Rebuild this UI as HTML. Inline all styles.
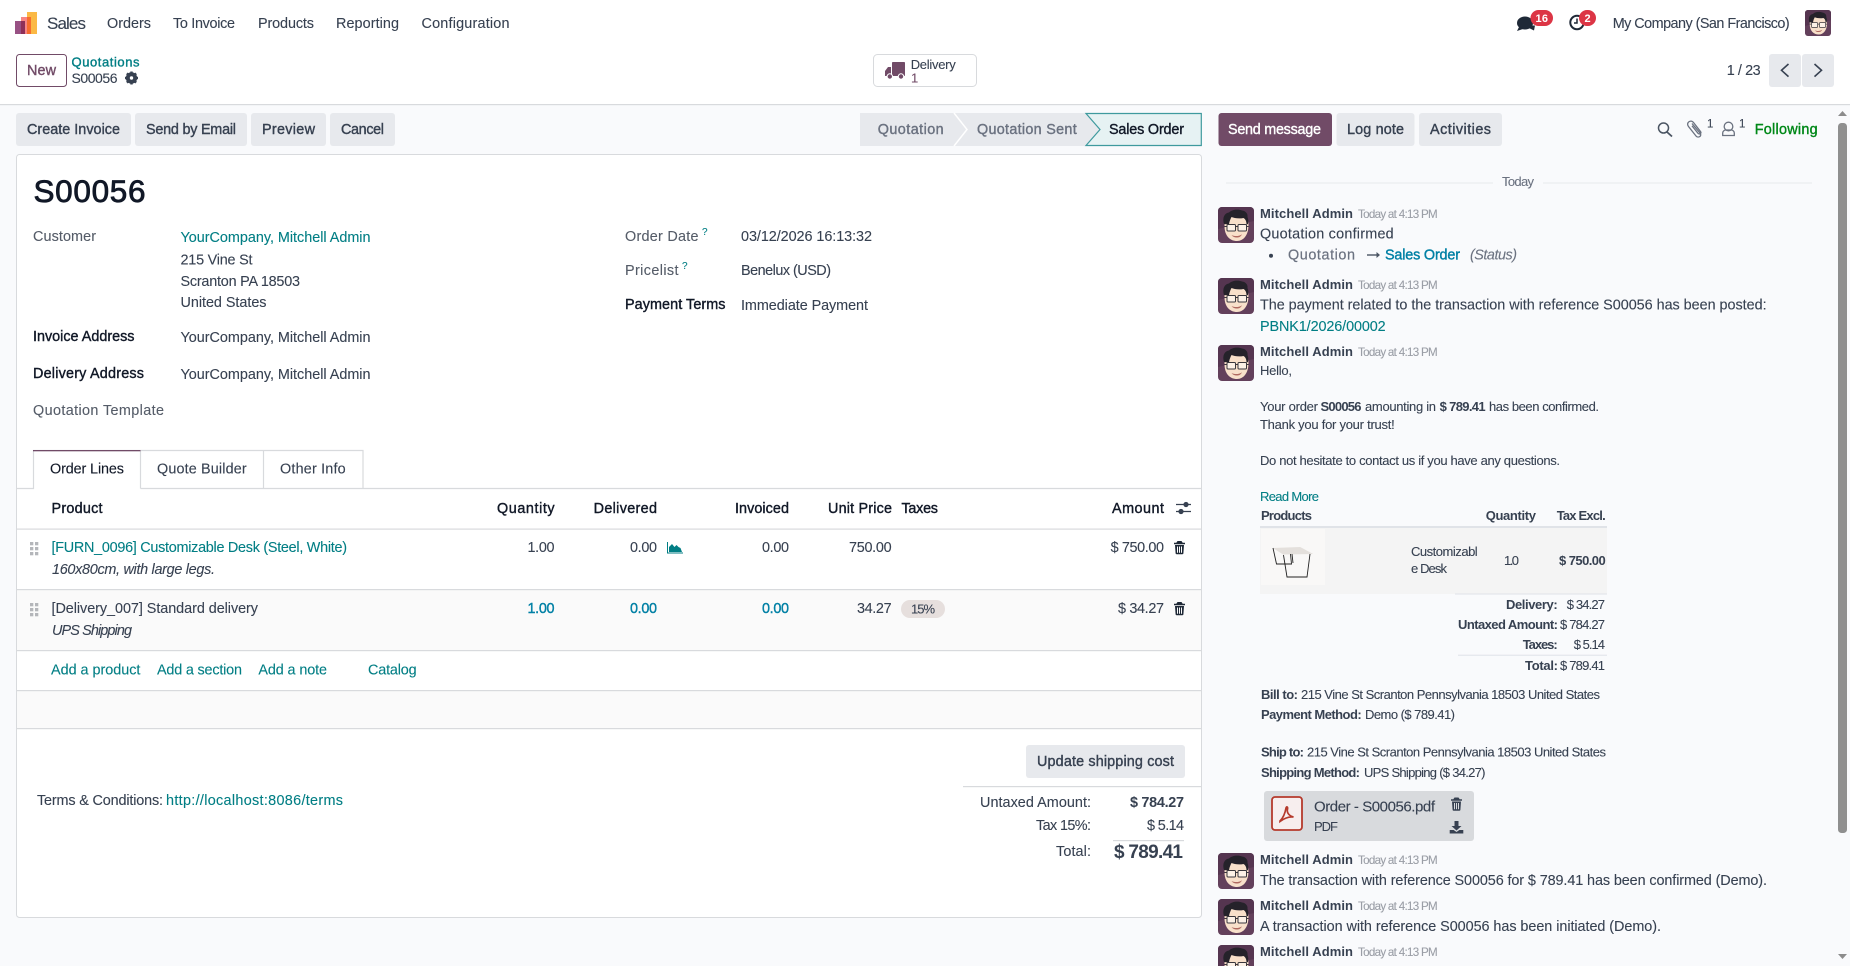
<!DOCTYPE html>
<html lang="en"><head><meta charset="utf-8"><title>S00056 - Sales</title>
<style>
html,body{margin:0;padding:0;width:1850px;height:966px;overflow:hidden;background:#f9fafc;color:#374151}
svg{display:block;position:absolute;left:0;top:0}
text{font-family:"Liberation Sans",sans-serif;font-size:14.4px;fill:#374151;stroke:currentColor;stroke-width:.1}
text.m{stroke-width:.38}
.b{font-weight:700}
text.b{stroke-width:0}
.s{font-size:13px}
.xs{font-size:11.6px}
.tl{fill:#017e84;color:#017e84}
.dk{fill:#111827;color:#111827}
.gr{fill:#6b7280;color:#6b7280}
.lb{fill:#555c68;color:#555c68}
.g2{fill:#9a9ea6;color:#9a9ea6}
.bl{fill:#0180a5;color:#0180a5}
.d{color:#374151}
.w{fill:#fff;color:#fff}
.i{font-style:italic}
</style></head><body>
<svg width="1850" height="966" viewBox="0 0 1850 966" xmlns="http://www.w3.org/2000/svg">
<defs>
<symbol id="av" viewBox="0 0 36 36">
<rect width="36" height="36" rx="4" fill="#63405b"/>
<path d="M0 22V4a4 4 0 0 1 4-4h28a4 4 0 0 1 4 4v10z" fill="#553550"/>
<path d="M6.500 19c0-9 6-12 12.500-12s11.500 3 11.500 11c0 10-5 16-11.500 16C12 34 6.500 29 6.500 19z" fill="#f8e0ca"/>
<path d="M6 17C4 10 7 6 11 5.500c3-3 9-3.500 13-2 4 .5 6 3.500 5.500 6.500 1 2.500 1 5 .5 7l-1.500.5c0-3-1-5.500-3-6.500-5 1-9.500 0-12-1-1 2-2 4-2.500 7.500z" fill="#25222a"/>
<rect x="9" y="17.500" width="8.500" height="6.500" rx="1" fill="#fff8" stroke="#3a383d" stroke-width="1"/>
<rect x="20" y="17.500" width="8.500" height="6.500" rx="1" fill="#fff8" stroke="#3a383d" stroke-width="1"/>
<path d="M17.500 19.500h2.500M6.500 19.500h2.500M28.500 19.500h2" stroke="#3a383d" stroke-width="1"/>
<path d="M13.500 28c3 1.500 7.500 1.500 10.500-.8-1.500 2.800-3 3.300-5.300 3.300s-4-.8-5.200-2.500z" fill="#b06a60"/>
</symbol>
<g id="tr"><path d="M2.300 1.800 3.500 0h4l1.200 1.800H11v1.400H0V1.800zM1 4h9l-.6 8.200c0 .6-.5 1-1 1H2.600c-.5 0-1-.4-1-1zm2 1.500v6.200h1V5.500zm2 0v6.200h1V5.500zm2 0v6.200h1V5.500z"/></g>
</defs>

<!-- header -->
<rect width="1850" height="104" fill="#fff"/>
<rect y="104" width="1850" height="1.200" fill="#d8dadd"/>
<rect x="27" y="12" width="10" height="22" fill="#fbb945"/>
<rect x="21" y="17" width="10" height="17" fill="#f78585"/>
<rect x="27" y="17" width="4" height="17" fill="#f76c2e"/>
<rect x="15" y="21" width="10" height="13" fill="#985184"/>
<rect x="21" y="21" width="4" height="13" fill="#8f2f58"/>
<text x="47" y="29" style="font-size:17px" textLength="39">Sales</text>
<text x="107" y="28" textLength="44">Orders</text>
<text x="173" y="28" textLength="62">To Invoice</text>
<text x="258" y="28" textLength="56">Products</text>
<text x="336" y="28" textLength="63">Reporting</text>
<text x="421.500" y="28" textLength="88">Configuration</text>

<!-- systray -->
<g fill="#1f2937">
<ellipse cx="1525" cy="23" rx="8" ry="6.500"/>
<path d="M1519 27l-2 4 6-2zM1531 25.500l4 0-1 5-5-2.500z"/>
</g>
<rect x="1530.500" y="10" width="22.500" height="16" rx="8" fill="#dc3545"/>
<text x="1535.500" y="22" class="b w" style="font-size:11px" textLength="12.500">16</text>
<circle cx="1577" cy="22.500" r="6.700" fill="none" stroke="#1f2937" stroke-width="2"/>
<path d="M1577 18.500v4.500h-3" fill="none" stroke="#1f2937" stroke-width="1.500"/>
<rect x="1579" y="10" width="17" height="16" rx="8" fill="#dc3545"/>
<text x="1584.500" y="22" class="b w" style="font-size:11px" textLength="6.500">2</text>
<text x="1612.700" y="28" textLength="177">My Company (San Francisco)</text>
<use href="#av" x="1805" y="10" width="26" height="26"/>

<!-- control panel -->
<rect x="16.500" y="54.500" width="50" height="32" rx="3" fill="#fff" stroke="#714b67"/>
<text x="27" y="75" class="m" style="fill:#714b67;color:#714b67" textLength="29">New</text>
<text x="71.500" y="66.500" class="s m tl" textLength="68">Quotations</text>
<text x="71.500" y="83" style="font-size:14px" textLength="46">S00056</text>
<g transform="translate(131.500 78)">
<circle r="4.300" fill="none" stroke="#374151" stroke-width="2.800"/>
<path d="M-1.200-6.500h2.400v13h-2.400zM-6.500-1.200h13v2.400h-13z" fill="#374151"/>
<path d="M-1.200-6.500h2.400v13h-2.400zM-6.500-1.200h13v2.400h-13z" fill="#374151" transform="rotate(45)"/>
<circle r="1.700" fill="#fff"/>
</g>
<rect x="873.500" y="54.500" width="103" height="32" rx="4" fill="#fff" stroke="#d8dadd"/>
<g fill="#714b67">
<rect x="892" y="62" width="13" height="14" rx=".8"/>
<path d="M885 76v-5l3-4h3v9z"/>
<circle cx="889.800" cy="76.500" r="3.200" fill="#fff"/><circle cx="889.800" cy="76.500" r="2.200"/>
<circle cx="901" cy="76.500" r="3.200" fill="#fff"/><circle cx="901" cy="76.500" r="2.200"/>
</g>
<text x="910.700" y="69" class="s" textLength="45">Delivery</text>
<text x="911" y="82.500" class="s" style="fill:#714b67;color:#714b67">1</text>
<text x="1726.700" y="75" textLength="34">1 / 23</text>
<rect x="1769" y="54" width="32" height="33" rx="3" fill="#e7e9ed"/>
<rect x="1802" y="54" width="32" height="33" rx="3" fill="#e7e9ed"/>
<path d="M1788.500 64l-7 6.300 7 6.300M1814.500 64l7 6.300-7 6.300" fill="none" stroke="#374151" stroke-width="1.600"/>

<!-- action buttons -->
<g fill="#e7e9ed">
<rect x="16" y="113" width="115" height="33" rx="3"/>
<rect x="135" y="113" width="112" height="33" rx="3"/>
<rect x="251" y="113" width="75" height="33" rx="3"/>
<rect x="330" y="113" width="65" height="33" rx="3"/>
<rect x="1336.500" y="113" width="78" height="33" rx="3"/>
<rect x="1419" y="113" width="83" height="33" rx="3"/>
</g>
<rect x="1218.500" y="113" width="113.500" height="33" rx="3" fill="#714b67"/>
<text x="27" y="134" class="m d" textLength="93">Create Invoice</text>
<text x="146" y="134" class="m d" textLength="90">Send by Email</text>
<text x="262" y="134" class="m d" textLength="53">Preview</text>
<text x="341" y="134" class="m d" textLength="43">Cancel</text>
<text x="1228" y="134" class="m w" textLength="93">Send message</text>
<text x="1347" y="134" class="m d" textLength="57">Log note</text>
<text x="1430" y="134" class="m d" textLength="61">Activities</text>

<!-- statusbar -->
<path d="M860 113H1086L1100 129.500 1086 146H860z" fill="#e7e9ed"/>
<path d="M954 113l13 16.500-13 16.500" fill="none" stroke="#fff" stroke-width="1.500"/>
<path d="M1086 113.500H1201.300V145.500H1086L1100 129.500z" fill="#e6f2f3" stroke="#3f9a9e" stroke-width="1.200"/>
<text x="877.700" y="134" class="m gr" textLength="66">Quotation</text>
<text x="977" y="134" class="m gr" textLength="99.700">Quotation Sent</text>
<text x="1109" y="134" class="m dk" textLength="75">Sales Order</text>

<!-- sheet -->
<rect x="16.500" y="154.500" width="1185" height="763" rx="3" fill="#fff" stroke="#d8dadd"/>
<text x="33.500" y="202" class="m" style="font-size:31.500px;fill:#111827;color:#111827;stroke-width:.8" textLength="112">S00056</text>

<text x="33" y="241" class="lb" textLength="63">Customer</text>
<text x="180.500" y="242" class="tl" textLength="190">YourCompany, Mitchell Admin</text>
<text x="180.500" y="264.500" textLength="72">215 Vine St</text>
<text x="180.500" y="286" textLength="119.500">Scranton PA 18503</text>
<text x="180.500" y="307" textLength="86">United States</text>
<text x="33" y="341" class="m dk" textLength="101.500">Invoice Address</text>
<text x="180.500" y="342" textLength="190">YourCompany, Mitchell Admin</text>
<text x="33" y="378" class="m dk" textLength="111">Delivery Address</text>
<text x="180.500" y="379" textLength="190">YourCompany, Mitchell Admin</text>
<text x="33" y="415" class="lb" textLength="131">Quotation Template</text>

<text x="625" y="241" class="lb" textLength="73.500">Order Date</text>
<text x="702" y="235" class="tl" style="font-size:10px">?</text>
<text x="741" y="241" textLength="131">03/12/2026 16:13:32</text>
<text x="625" y="275" class="lb" textLength="53.500">Pricelist</text>
<text x="682" y="269" class="tl" style="font-size:10px">?</text>
<text x="741" y="275" textLength="90">Benelux (USD)</text>
<text x="625" y="309" class="m dk" textLength="100.500">Payment Terms</text>
<text x="741" y="310" textLength="127">Immediate Payment</text>

<!-- tabs -->
<path d="M17 488.500H33.500V450.500H140.500V488.500M140.500 450.500H263.500V488.500M263.500 450.500H363V488.500M140.500 488.500H1201" fill="none" stroke="#d8dadd" stroke-width="1.200"/>
<rect x="33" y="450" width="107.500" height="1.300" fill="#714b67"/>
<text x="50" y="473.300" class="dk" textLength="74">Order Lines</text>
<text x="157" y="473.300" textLength="89.700">Quote Builder</text>
<text x="280" y="473.300" textLength="65.700">Other Info</text>

<!-- table -->
<rect x="17" y="590" width="1184" height="60" fill="#fafafa"/>
<rect x="17" y="691" width="1184" height="37" fill="#fafafa"/>
<g fill="#d8dadd">
<rect x="17" y="528.500" width="1184" height="1.200"/>
<rect x="17" y="589" width="1184" height="1.200"/>
<rect x="17" y="650" width="1184" height="1.200"/>
<rect x="17" y="690" width="1184" height="1.200"/>
<rect x="17" y="728" width="1184" height="1.200"/>
</g>
<text x="51.500" y="513" class="m dk" textLength="51">Product</text>
<text x="497" y="513" class="m dk" textLength="57.600">Quantity</text>
<text x="593.600" y="513" class="m dk" textLength="63.400">Delivered</text>
<text x="735" y="513" class="m dk" textLength="54">Invoiced</text>
<text x="828" y="513" class="m dk" textLength="64">Unit Price</text>
<text x="901.500" y="513" class="m dk" textLength="36.500">Taxes</text>
<text x="1112" y="513" class="m dk" textLength="52">Amount</text>
<path d="M1176 504.500h15M1176 511.500h15" stroke="#374151" stroke-width="1.200"/>
<circle cx="1186" cy="504.500" r="2.600" fill="#374151"/><circle cx="1181" cy="511.500" r="2.600" fill="#374151"/>

<g fill="#b4b6ba">
<rect x="30" y="542" width="3.300" height="3.300"/><rect x="35" y="542" width="3.300" height="3.300"/>
<rect x="30" y="547" width="3.300" height="3.300"/><rect x="35" y="547" width="3.300" height="3.300"/>
<rect x="30" y="552" width="3.300" height="3.300"/><rect x="35" y="552" width="3.300" height="3.300"/>
<rect x="30" y="603" width="3.300" height="3.300"/><rect x="35" y="603" width="3.300" height="3.300"/>
<rect x="30" y="608" width="3.300" height="3.300"/><rect x="35" y="608" width="3.300" height="3.300"/>
<rect x="30" y="613" width="3.300" height="3.300"/><rect x="35" y="613" width="3.300" height="3.300"/>
</g>
<text x="51.500" y="552" class="tl" textLength="295.500">[FURN_0096] Customizable Desk (Steel, White)</text>
<text x="52" y="574" class="i" textLength="163">160x80cm, with large legs.</text>
<text x="51.500" y="613" textLength="206.500">[Delivery_007] Standard delivery</text>
<text x="52" y="635" class="i" textLength="80">UPS Shipping</text>

<text x="527.500" y="552" textLength="27">1.00</text>
<text x="630" y="552" textLength="27">0.00</text>
<path d="M667.500 542v11h15.500" fill="none" stroke="#017e84" stroke-width="1"/>
<path d="M669 552v-5l3-3 2.500 3 2-2 2 2 2 1 1.500 4z" fill="#017e84"/>
<text x="762" y="552" textLength="27">0.00</text>
<text x="849" y="552" textLength="42.600">750.00</text>
<text x="1110.600" y="552" textLength="53.400">$ 750.00</text>
<use href="#tr" x="1174" y="541" fill="#1f2937"/>

<text x="527.500" y="613" class="m bl" textLength="27">1.00</text>
<text x="630" y="613" class="m bl" textLength="27">0.00</text>
<text x="762" y="613" class="m bl" textLength="27">0.00</text>
<text x="857" y="613" textLength="34.600">34.27</text>
<rect x="901" y="600" width="44" height="18" rx="9" fill="#e6dfdd"/>
<text x="911" y="613.500" class="s" textLength="24">15%</text>
<text x="1118" y="613" textLength="46">$ 34.27</text>
<use href="#tr" x="1174" y="602" fill="#1f2937"/>

<text x="51" y="674.500" class="tl" textLength="89.400">Add a product</text>
<text x="157" y="674.500" class="tl" textLength="85">Add a section</text>
<text x="258.400" y="674.500" class="tl" textLength="68.600">Add a note</text>
<text x="368" y="674.500" class="tl" textLength="48.600">Catalog</text>

<!-- totals -->
<rect x="1026" y="745" width="159" height="33" rx="3" fill="#e7e9ed"/>
<text x="1037" y="766" class="m d" textLength="137">Update shipping cost</text>
<rect x="963" y="786" width="238" height="1.200" fill="#d8dadd"/>
<text x="37" y="805" textLength="126">Terms &amp; Conditions:</text>
<text x="166" y="805" class="tl" textLength="177">http://localhost:8086/terms</text>
<text x="980" y="807" textLength="111">Untaxed Amount:</text>
<text x="1130" y="807" class="b" textLength="54">$ 784.27</text>
<text x="1036" y="830" textLength="55">Tax 15%:</text>
<text x="1147" y="830" textLength="37">$ 5.14</text>
<rect x="1113" y="840" width="71" height="1.200" fill="#d8dadd"/>
<text x="1056" y="856" textLength="35">Total:</text>
<text x="1114" y="858" class="b" style="font-size:19px" textLength="69">$ 789.41</text>

<!-- chatter top -->
<circle cx="1663.500" cy="128" r="5" fill="none" stroke="#4b5563" stroke-width="1.500"/>
<path d="M1667 132l5 4.500" stroke="#4b5563" stroke-width="1.800"/>
<path d="M1692 123.500l8 9.500c2.500 3-2 5.500-4 3l-7.500-9.500c-3-3.800 2.500-7.500 5-4l7 9c1.500 2-1 3.300-2.500 1.800l-6-7.500" fill="none" stroke="#6b7280" stroke-width="1.300"/>
<text x="1707" y="127.700" style="font-size:11.500px">1</text>
<circle cx="1728.500" cy="126.500" r="4.300" fill="none" stroke="#6b7280" stroke-width="1.300"/>
<path d="M1722.700 135.500v-2.500c0-2 2-3 3-3h5.600c1 0 3 1 3 3v2.500z" fill="none" stroke="#6b7280" stroke-width="1.300"/>
<text x="1739" y="127.700" style="font-size:11.500px">1</text>
<text x="1754.700" y="134" class="m" style="fill:#008818;color:#008818" textLength="63">Following</text>

<!-- scrollbar -->
<path d="M1838 116l4.500-5 4.500 5z" fill="#8c8c8c"/>
<rect x="1838" y="123" width="9" height="710" rx="3.500" fill="#8f8f8f"/>
<path d="M1838 954l4.500 5 4.500-5z" fill="#8c8c8c"/>

<!-- messages -->
<rect x="1226" y="182.500" width="267" height="1" fill="#e7e9ed"/>
<rect x="1543" y="182.500" width="269" height="1" fill="#e7e9ed"/>
<text x="1502" y="186" class="s gr" textLength="32">Today</text>

<use href="#av" x="1218" y="207" width="36" height="36"/>
<text x="1260" y="218" class="b s" textLength="93">Mitchell Admin</text>
<text x="1358" y="218" class="xs g2" textLength="79.700">Today at 4:13 PM</text>
<text x="1260" y="238.500" textLength="133.700">Quotation confirmed</text>
<circle cx="1271" cy="255.700" r="2" fill="#374151"/>
<text x="1288" y="259.500" class="gr" style="stroke-width:.2" textLength="67">Quotation</text>
<path d="M1367 255h11" stroke="#4b5563" stroke-width="1.400"/><path d="M1376.500 252l3.500 3-3.500 3z" fill="#4b5563"/>
<text x="1385" y="259.500" class="m bl" textLength="75">Sales Order</text>
<text x="1470" y="259.500" class="i gr" textLength="47">(Status)</text>

<use href="#av" x="1218" y="278" width="36" height="36"/>
<text x="1260" y="289" class="b s" textLength="93">Mitchell Admin</text>
<text x="1358" y="289" class="xs g2" textLength="79.700">Today at 4:13 PM</text>
<text x="1260" y="309.500" textLength="506.600">The payment related to the transaction with reference S00056 has been posted:</text>
<text x="1260" y="331" class="tl" textLength="125.700">PBNK1/2026/00002</text>

<use href="#av" x="1218" y="345" width="36" height="36"/>
<text x="1260" y="356" class="b s" textLength="93">Mitchell Admin</text>
<text x="1358" y="356" class="xs g2" textLength="79.700">Today at 4:13 PM</text>
<text x="1260" y="375" class="s" textLength="32">Hello,</text>
<text x="1260" y="411" class="s" textLength="58">Your order</text>
<text x="1320.500" y="411" class="b s" textLength="41">S00056</text>
<text x="1365" y="411" class="s" textLength="71">amounting in</text>
<text x="1439.600" y="411" class="b s" textLength="46">$ 789.41</text>
<text x="1489" y="411" class="s" textLength="110">has been confirmed.</text>
<text x="1260" y="429" class="s" textLength="134.700">Thank you for your trust!</text>
<text x="1260" y="465" class="s" textLength="300">Do not hesitate to contact us if you have any questions.</text>
<text x="1260" y="501" class="s tl" textLength="59">Read More</text>

<text x="1261" y="520" class="b s" textLength="51">Products</text>
<text x="1485.700" y="520" class="b s" textLength="50.300">Quantity</text>
<text x="1556.700" y="520" class="b s" textLength="49">Tax Excl.</text>
<rect x="1260" y="526" width="347" height="2" fill="#e0e3e8"/>
<rect x="1260" y="528" width="347" height="66" fill="#f4f4f4"/>
<rect x="1261" y="529" width="64" height="56" fill="#f9f8f7"/>
<path d="M1272.700 548l27.500-1 13 7-30 .500z" fill="#e4e0dc"/>
<path d="M1273 548l3.500 16h15l-1-10M1283.500 555l3.500 22h20l3-23M1292 554l1 9" fill="none" stroke="#222" stroke-width=".9"/>
<text x="1411" y="556" class="s" textLength="66.700">Customizabl</text>
<text x="1411" y="573" class="s" textLength="36">e Desk</text>
<text x="1504" y="565" class="s" textLength="15">1.0</text>
<text x="1559" y="565" class="b s" textLength="46.700">$ 750.00</text>
<rect x="1455" y="593.500" width="152" height="1" fill="#dfe2e8"/>
<text x="1506" y="609" class="b s" textLength="51.700">Delivery:</text>
<text x="1566.700" y="609" class="s" textLength="38.300">$ 34.27</text>
<text x="1458" y="629" class="b s" textLength="100">Untaxed Amount:</text>
<text x="1560" y="629" class="s" textLength="45">$ 784.27</text>
<text x="1522.700" y="649" class="b s" textLength="35">Taxes:</text>
<text x="1573.700" y="649" class="s" textLength="31.300">$ 5.14</text>
<rect x="1458" y="654.700" width="149" height="1" fill="#dfe2e8"/>
<text x="1525" y="670" class="b s" textLength="33">Total:</text>
<text x="1560" y="670" class="s" textLength="45">$ 789.41</text>

<text x="1261" y="699" class="b s" textLength="37">Bill to:</text>
<text x="1301" y="699" class="s" textLength="299">215 Vine St Scranton Pennsylvania 18503 United States</text>
<text x="1261" y="719" class="b s" textLength="100.700">Payment Method:</text>
<text x="1365" y="719" class="s" textLength="90">Demo ($ 789.41)</text>
<text x="1261" y="756.500" class="b s" textLength="43">Ship to:</text>
<text x="1307" y="756.500" class="s" textLength="299">215 Vine St Scranton Pennsylvania 18503 United States</text>
<text x="1261" y="777" class="b s" textLength="99">Shipping Method:</text>
<text x="1364" y="777" class="s" textLength="121.500">UPS Shipping ($ 34.27)</text>

<rect x="1264" y="791" width="210" height="50" rx="3" fill="#d8dadd"/>
<rect x="1272" y="797" width="30" height="33" rx="3" fill="#f7eeee" stroke="#b53a2c" stroke-width="1.800"/>
<path d="M1280 821c3-3 5-7 6-13 .5-2 2-1 1.500 1-1 4 2 7 6 8-5-.5-9 1-13.500 4.500z" fill="none" stroke="#b53a2c" stroke-width="1.700"/>
<text x="1314" y="811.500" style="font-size:15px" textLength="121">Order - S00056.pdf</text>
<text x="1314" y="831" class="s" textLength="24">PDF</text>
<use href="#tr" x="1451" y="797.500" fill="#374151"/>
<path d="M1454.500 821h4v5h3l-5 4.500-5-4.500h3zM1449.700 830h4l2.800 2 2.800-2h4v3.500h-13.600z" fill="#374151"/>

<use href="#av" x="1218" y="853" width="36" height="36"/>
<text x="1260" y="864" class="b s" textLength="93">Mitchell Admin</text>
<text x="1358" y="864" class="xs g2" textLength="79.700">Today at 4:13 PM</text>
<text x="1260" y="885" textLength="507">The transaction with reference S00056 for $ 789.41 has been confirmed (Demo).</text>

<use href="#av" x="1218" y="899" width="36" height="36"/>
<text x="1260" y="910" class="b s" textLength="93">Mitchell Admin</text>
<text x="1358" y="910" class="xs g2" textLength="79.700">Today at 4:13 PM</text>
<text x="1260" y="931" textLength="401">A transaction with reference S00056 has been initiated (Demo).</text>

<use href="#av" x="1218" y="945" width="36" height="36"/>
<text x="1260" y="956" class="b s" textLength="93">Mitchell Admin</text>
<text x="1358" y="956" class="xs g2" textLength="79.700">Today at 4:13 PM</text>
</svg>
</body></html>
